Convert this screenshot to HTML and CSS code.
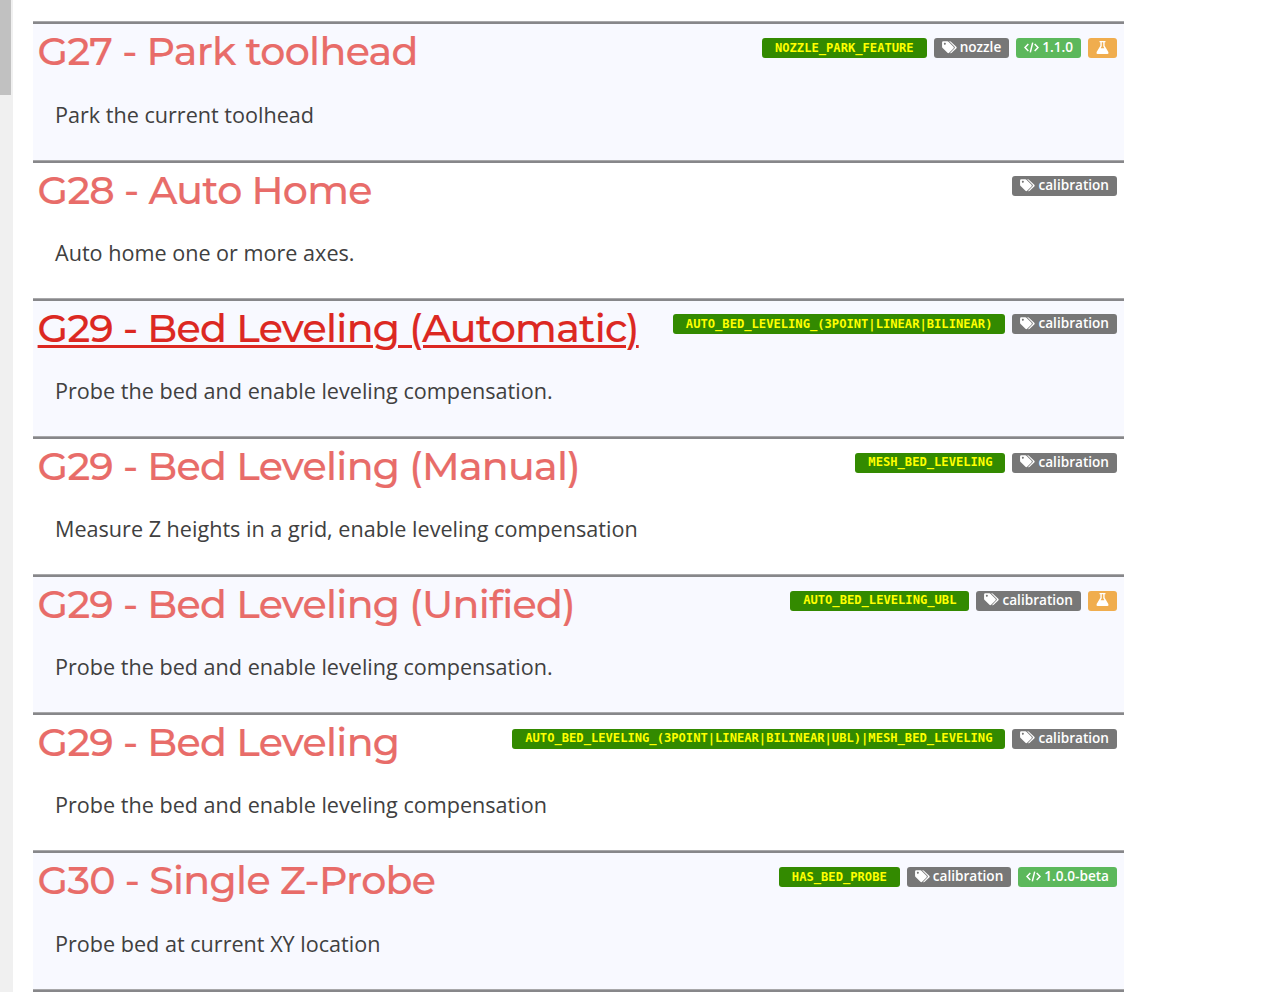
FILE: index.html
```
<!DOCTYPE html>
<html lang="en">
<head>
    <meta charset="UTF-8">
    <meta name="viewport" content="width=device-width, initial-scale=1.0">
    <title>G-code Index</title>
    <link rel="stylesheet" href="styles.css">
</head>
<body>
    <!-- Shared label icons -->
    <svg class="icon-defs">
        <symbol id="tags" viewBox="0 0 16 14">
            <path d="M1.3 0.4h4.4q.8 0 1.4.6l5.2 5.2q.9.9 0 1.8l-4.7 4.7q-.9.9-1.8 0L.6 7.5Q0 6.9 0 6.1V1.7Q0 .4 1.3.4zM3 2a1 1 0 1 0 .01 0z" fill-rule="evenodd"/>
            <path d="M7.6.4h.8q.8 0 1.4.6l5.5 5.2q.9.9 0 1.8l-4.9 4.7q-.9.9-1.8.1l4.6-4.6q1.1-1.2 0-2.4z"/>
        </symbol>
        <symbol id="code" viewBox="0 0 16 14">
            <path d="M4.6 3.2L1 7l3.6 3.8M11.4 3.2L15 7l-3.6 3.8M9.3 1.8L6.7 12.2" fill="none" stroke="currentColor" stroke-width="1.6"/>
        </symbol>
        <symbol id="flask" viewBox="0 0 14 14">
            <path d="M3.8 0h6.4v1.4H9.3v3.8l4 6.6Q14 13.8 12.4 14H1.6Q0 13.8.7 11.8l4-6.6V1.4h-.9zM6.2 1.4v4.2L5 7.7h4L7.8 5.6V1.4z" fill-rule="evenodd"/>
        </symbol>
    </svg>

    <div class="page">
        <div class="scroll-track">
            <div class="scroll-thumb"></div>
        </div>

        <div class="items">
            <div class="item">
                <div class="item-head">
                    <h2><a href="#">G27 - Park toolhead</a></h2>
                    <div class="labels">
                        <span class="label feature">NOZZLE_PARK_FEATURE</span>
                        <span class="label group"><svg><use href="#tags"/></svg>nozzle</span>
                        <span class="label since"><svg><use href="#code"/></svg>1.1.0</span>
                        <span class="label experimental"><svg><use href="#flask"/></svg></span>
                    </div>
                </div>
                <p>Park the current toolhead</p>
            </div>

            <div class="item">
                <div class="item-head">
                    <h2><a href="#">G28 - Auto Home</a></h2>
                    <div class="labels">
                        <span class="label group"><svg><use href="#tags"/></svg>calibration</span>
                    </div>
                </div>
                <p>Auto home one or more axes.</p>
            </div>

            <div class="item">
                <div class="item-head">
                    <h2><a class="active" href="#">G29 - Bed Leveling (Automatic)</a></h2>
                    <div class="labels">
                        <span class="label feature">AUTO_BED_LEVELING_(3POINT|LINEAR|BILINEAR)</span>
                        <span class="label group"><svg><use href="#tags"/></svg>calibration</span>
                    </div>
                </div>
                <p>Probe the bed and enable leveling compensation.</p>
            </div>

            <div class="item">
                <div class="item-head">
                    <h2><a href="#">G29 - Bed Leveling (Manual)</a></h2>
                    <div class="labels">
                        <span class="label feature">MESH_BED_LEVELING</span>
                        <span class="label group"><svg><use href="#tags"/></svg>calibration</span>
                    </div>
                </div>
                <p>Measure Z heights in a grid, enable leveling compensation</p>
            </div>

            <div class="item">
                <div class="item-head">
                    <h2><a href="#">G29 - Bed Leveling (Unified)</a></h2>
                    <div class="labels">
                        <span class="label feature">AUTO_BED_LEVELING_UBL</span>
                        <span class="label group"><svg><use href="#tags"/></svg>calibration</span>
                        <span class="label experimental"><svg><use href="#flask"/></svg></span>
                    </div>
                </div>
                <p>Probe the bed and enable leveling compensation.</p>
            </div>

            <div class="item">
                <div class="item-head">
                    <h2><a href="#">G29 - Bed Leveling</a></h2>
                    <div class="labels">
                        <span class="label feature">AUTO_BED_LEVELING_(3POINT|LINEAR|BILINEAR|UBL)|MESH_BED_LEVELING</span>
                        <span class="label group"><svg><use href="#tags"/></svg>calibration</span>
                    </div>
                </div>
                <p>Probe the bed and enable leveling compensation</p>
            </div>

            <div class="item">
                <div class="item-head">
                    <h2><a href="#">G30 - Single Z-Probe</a></h2>
                    <div class="labels">
                        <span class="label feature">HAS_BED_PROBE</span>
                        <span class="label group"><svg><use href="#tags"/></svg>calibration</span>
                        <span class="label since"><svg><use href="#code"/></svg>1.0.0-beta</span>
                    </div>
                </div>
                <p>Probe bed at current XY location</p>
            </div>

            <div class="item"></div>
        </div>
    </div>
</body>
</html>
```
FILE: styles.css
```
* {
    margin: 0;
    padding: 0;
    box-sizing: border-box;
}

body {
    background: #fff;
    color: #404040;
    font-family: "Open Sans", sans-serif;
    overflow: hidden;
}

.icon-defs {
    display: none;
}

.page {
    display: flex;
    height: 992px;
    overflow: hidden;
}

.scroll-track {
    width: 13px;
    background: #f0f0f0;
}

.scroll-thumb {
    width: 11px;
    height: 95px;
    background: #c1c1c1;
}

.items {
    width: 1091px;
    margin-left: 20px;
    padding-top: 22.49px;
}

.item {
    height: 138.16px;
    border-top: 2px solid #87878a;
    box-shadow: 0 -1px #a8a8aa;
}

.item:nth-child(odd) {
    background: #f8f9ff;
}

.item-head {
    display: flex;
    justify-content: space-between;
    height: 54px;
    padding: 0 7px 0 4.6px;
}

h2 {
    font-family: Montserrat, Inter, sans-serif;
    font-size: 39.5px;
    font-weight: 500;
    letter-spacing: -0.7px;
    line-height: 54px;
    white-space: nowrap;
    -webkit-text-stroke: 0.15px;
}

h2 a {
    color: #e86c69;
    text-decoration: none;
}

h2 a.active {
    color: #dc2822;
    text-decoration: underline;
    text-decoration-thickness: 3px;
    text-underline-offset: 3px;
}

.labels {
    display: flex;
    gap: 7px;
    padding-top: 13.6px;
}

.label {
    display: flex;
    align-items: center;
    height: 20px;
    padding: 0 8px 3px;
    border-radius: 3px;
    color: #fff;
    font-size: 13.6px;
    font-weight: 600;
    line-height: 17px;
    white-space: nowrap;
}

.label svg {
    width: 15px;
    height: 13px;
    margin: 1px 3px 0 0;
    fill: currentColor;
}

.feature {
    padding: 0 13px;
    background: #338a00;
    color: #ff0;
    font-family: "DejaVu Sans Mono", monospace;
    font-size: 12.13px;
    font-weight: bold;
}

.group {
    background: #777;
}

.since {
    background: #5cb85c;
}

.experimental {
    background: #f0ad4e;
}

.experimental svg {
    width: 13px;
    margin: 1px 0 0;
}

p {
    padding: 21.1px 22px 0;
    font-size: 21.6px;
    line-height: 29px;
}
```
